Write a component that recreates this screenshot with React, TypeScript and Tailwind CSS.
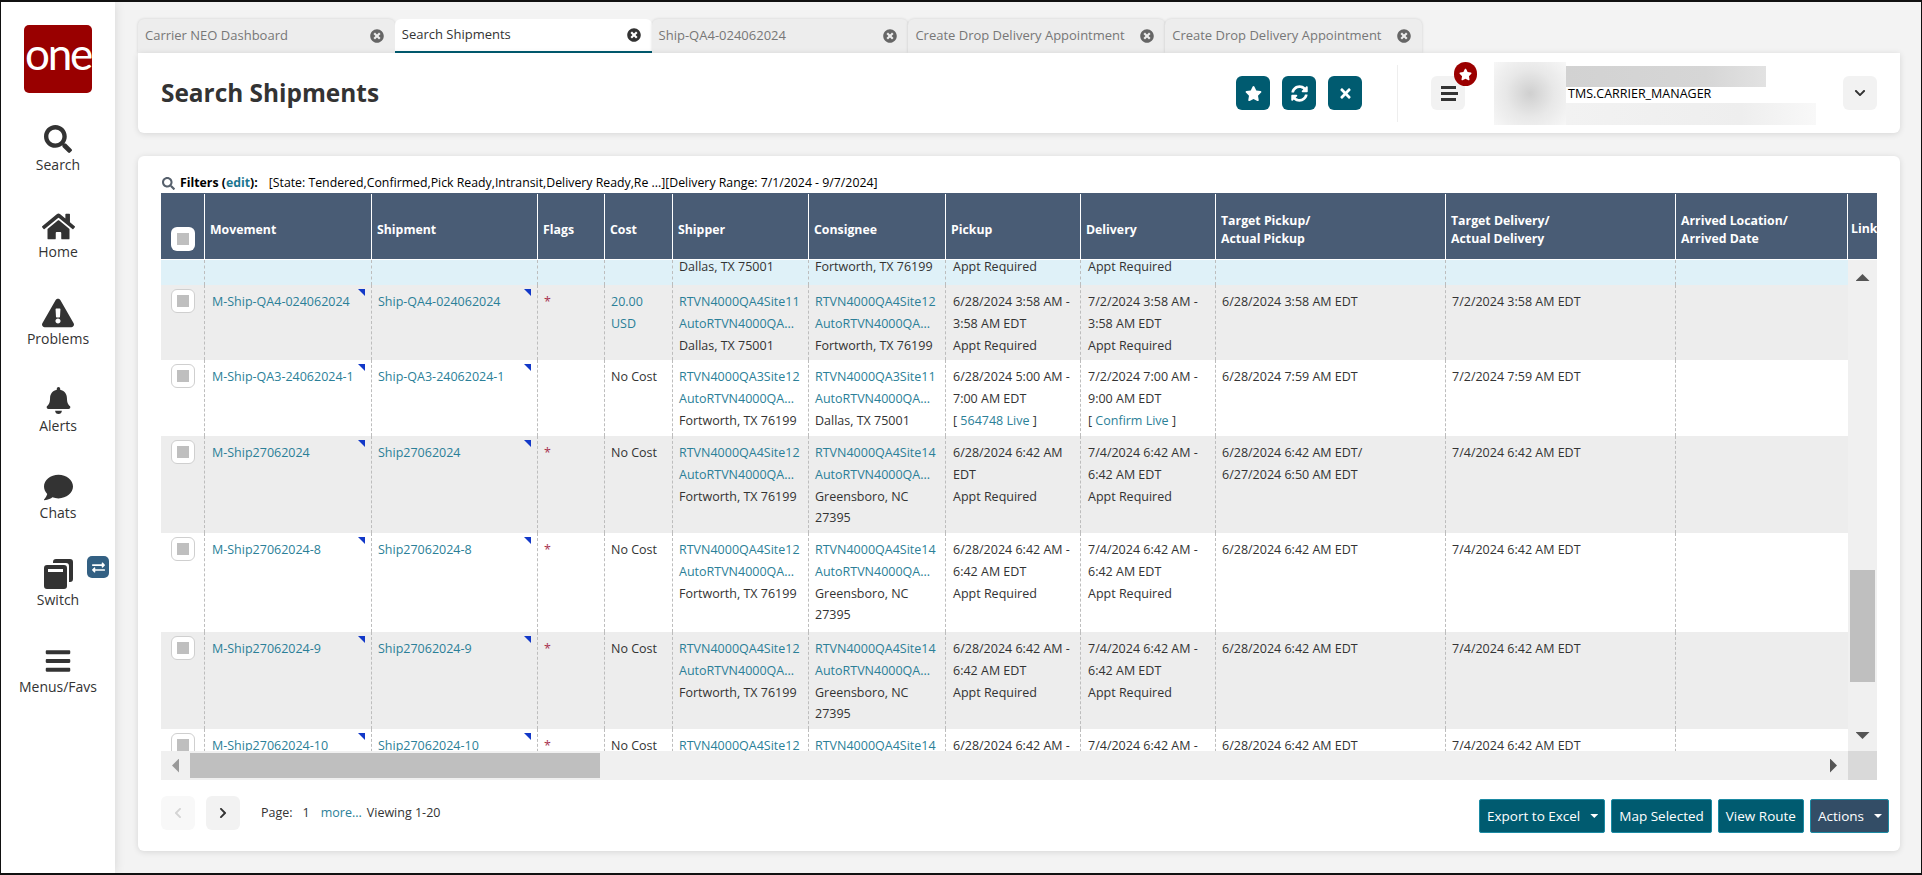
import React from "react";
import {
  FaSearch, FaHome, FaExclamationTriangle, FaBell, FaComment, FaBars, FaStar, FaSyncAlt,
  FaTimes, FaChevronDown, FaChevronLeft, FaChevronRight, FaTimesCircle, FaExchangeAlt,
} from "react-icons/fa";

const GRID = "grid grid-cols-[43px_167px_166px_67px_68px_136px_137px_135px_135px_230px_230px_173px]";

type L = { t: string; link?: boolean };
type Row = {
  h: string; bg: string; m: string; s: string; flag: boolean; cost: string[]; costLink?: boolean;
  shipper: L[]; consignee: L[]; pickup: React.ReactNode[]; delivery: React.ReactNode[]; tp: string[]; td: string[];
};

const A = "AutoRTVN4000QA...";
const site = (name: string, addr: string[]): L[] => [{ t: name, link: true }, { t: A, link: true }, ...addr.map((t) => ({ t }))];
const FW = ["Fortworth, TX 76199"];
const DA = ["Dallas, TX 75001"];
const GB = ["Greensboro, NC", "27395"];
const bracket = (s: string) => (
  <>[ <span className="text-[#2b7f98]">{s}</span> ]</>
);

const rows: Row[] = [
  { h: "h-[75px]", bg: "bg-[#ededed]", m: "M-Ship-QA4-024062024", s: "Ship-QA4-024062024", flag: true, cost: ["20.00", "USD"], costLink: true,
    shipper: site("RTVN4000QA4Site11", DA), consignee: site("RTVN4000QA4Site12", FW),
    pickup: ["6/28/2024 3:58 AM -", "3:58 AM EDT", "Appt Required"], delivery: ["7/2/2024 3:58 AM -", "3:58 AM EDT", "Appt Required"],
    tp: ["6/28/2024 3:58 AM EDT"], td: ["7/2/2024 3:58 AM EDT"] },
  { h: "h-[76px]", bg: "bg-white", m: "M-Ship-QA3-24062024-1", s: "Ship-QA3-24062024-1", flag: false, cost: ["No Cost"],
    shipper: site("RTVN4000QA3Site12", FW), consignee: site("RTVN4000QA3Site11", DA),
    pickup: ["6/28/2024 5:00 AM -", "7:00 AM EDT", bracket("564748 Live")], delivery: ["7/2/2024 7:00 AM -", "9:00 AM EDT", bracket("Confirm Live")],
    tp: ["6/28/2024 7:59 AM EDT"], td: ["7/2/2024 7:59 AM EDT"] },
  { h: "h-[97px]", bg: "bg-[#ededed]", m: "M-Ship27062024", s: "Ship27062024", flag: true, cost: ["No Cost"],
    shipper: site("RTVN4000QA4Site12", FW), consignee: site("RTVN4000QA4Site14", GB),
    pickup: ["6/28/2024 6:42 AM", "EDT", "Appt Required"], delivery: ["7/4/2024 6:42 AM -", "6:42 AM EDT", "Appt Required"],
    tp: ["6/28/2024 6:42 AM EDT/", "6/27/2024 6:50 AM EDT"], td: ["7/4/2024 6:42 AM EDT"] },
  { h: "h-[99px]", bg: "bg-white", m: "M-Ship27062024-8", s: "Ship27062024-8", flag: true, cost: ["No Cost"],
    shipper: site("RTVN4000QA4Site12", FW), consignee: site("RTVN4000QA4Site14", GB),
    pickup: ["6/28/2024 6:42 AM -", "6:42 AM EDT", "Appt Required"], delivery: ["7/4/2024 6:42 AM -", "6:42 AM EDT", "Appt Required"],
    tp: ["6/28/2024 6:42 AM EDT"], td: ["7/4/2024 6:42 AM EDT"] },
  { h: "h-[97px]", bg: "bg-[#ededed]", m: "M-Ship27062024-9", s: "Ship27062024-9", flag: true, cost: ["No Cost"],
    shipper: site("RTVN4000QA4Site12", FW), consignee: site("RTVN4000QA4Site14", GB),
    pickup: ["6/28/2024 6:42 AM -", "6:42 AM EDT", "Appt Required"], delivery: ["7/4/2024 6:42 AM -", "6:42 AM EDT", "Appt Required"],
    tp: ["6/28/2024 6:42 AM EDT"], td: ["7/4/2024 6:42 AM EDT"] },
  { h: "h-[97px]", bg: "bg-white", m: "M-Ship27062024-10", s: "Ship27062024-10", flag: true, cost: ["No Cost"],
    shipper: site("RTVN4000QA4Site12", FW), consignee: site("RTVN4000QA4Site14", GB),
    pickup: ["6/28/2024 6:42 AM -", "6:42 AM EDT", "Appt Required"], delivery: ["7/4/2024 6:42 AM -", "6:42 AM EDT", "Appt Required"],
    tp: ["6/28/2024 6:42 AM EDT"], td: ["7/4/2024 6:42 AM EDT"] },
];

const SEP = "border-l border-dashed border-[#bdbdbd]";

function Cell({ children, className = "" }: { children?: React.ReactNode; className?: string }) {
  return <div className={`${SEP} pt-[6px] leading-[21.8px] whitespace-nowrap overflow-hidden ${className}`}>{children}</div>;
}

function Lines({ items }: { items: React.ReactNode[] }) {
  return <>{items.map((x, i) => <div key={i}>{x}</div>)}</>;
}

function Corner() {
  return <span className="absolute top-[4px] right-[6px] w-[7px] h-[7px] bg-[#1238c8] [clip-path:polygon(0_0,100%_0,100%_100%)]" />;
}

function Check({ header = false }: { header?: boolean }) {
  return (
    <span className={`flex items-center justify-center w-[24px] h-[24px] rounded-[6px] bg-white ${header ? "" : "border border-[#cfcfcf]"}`}>
      <span className="w-[12px] h-[12px] bg-[#bfbfbf]" />
    </span>
  );
}

function Caret() {
  return <span className="ml-[10px] mr-[-1px] w-[8px] h-[4px] bg-white [clip-path:polygon(0_0,100%_0,50%_100%)]" />;
}

function SwitchIcon() {
  return (
    <svg width="29" height="30" viewBox="0 0 29 30" fill="#333">
      <path d="M9 3a3 3 0 0 1 3-3h14a3 3 0 0 1 3 3v17a3 3 0 0 1-3 3h-1V7a3 3 0 0 0-3-3H9z" />
      <path fillRule="evenodd" d="M3 6h17a3 3 0 0 1 3 3v18a3 3 0 0 1-3 3H3a3 3 0 0 1-3-3V9a3 3 0 0 1 3-3zm1 4v3h15v-3z" />
    </svg>
  );
}

const navItems: { label: string; icon: React.ReactNode; badge?: boolean }[] = [
  { label: "Search", icon: <FaSearch size={28} /> },
  { label: "Home", icon: <FaHome size={33} /> },
  { label: "Problems", icon: <FaExclamationTriangle size={32} /> },
  { label: "Alerts", icon: <FaBell size={27} /> },
  { label: "Chats", icon: <FaComment size={29} /> },
  { label: "Switch", icon: <SwitchIcon />, badge: true },
  { label: "Menus/Favs", icon: <FaBars size={28} /> },
];

const tabs = ["Carrier NEO Dashboard", "Search Shipments", "Ship-QA4-024062024", "Create Drop Delivery Appointment", "Create Drop Delivery Appointment"];
const heads: React.ReactNode[] = [
  "Movement", "Shipment", "Flags", "Cost", "Shipper", "Consignee", "Pickup", "Delivery",
  <>Target Pickup/<br />Actual Pickup</>, <>Target Delivery/<br />Actual Delivery</>, <>Arrived Location/<br />Arrived Date</>,
];

function HeadBtn({ children }: { children: React.ReactNode }) {
  return <button className="flex items-center justify-center w-[34px] h-[34px] rounded-[6px] bg-[#005b70] text-white">{children}</button>;
}
function FootBtn({ children, dark = false }: { children: React.ReactNode; dark?: boolean }) {
  return (
    <button className={`flex items-center h-[34px] px-[7px] rounded-[2px] border border-[#1b8aa3] text-white text-[13.5px] ${dark ? "bg-[#334d66]" : "bg-[#005b70]"}`}>
      {children}
    </button>
  );
}

export default function App() {
  return (
    <div className="w-[1922px] h-[875px] flex overflow-hidden bg-[#f3f3f3] border-t-2 border-b-2 border-l border-r border-[#111] font-['Open_Sans',sans-serif] text-[#333] text-[12.5px]">
      <aside className="w-[114px] shrink-0 bg-white shadow-[0_0_10px_rgba(0,0,0,0.12)] flex flex-col items-center pt-[23px]">
        <div className="w-[68px] h-[68px] rounded-[5px] bg-[#990000] flex items-center justify-center text-white text-[44px] leading-none tracking-[-0.05em] pb-[12px] font-['Lato',sans-serif]">one</div>
        <nav className="mt-[27px] w-full flex flex-col">
          {navItems.map((n) => (
            <div key={n.label} className="relative h-[87px] flex flex-col items-center">
              <div className="h-[38px] flex items-center justify-center text-[#333]">{n.icon}</div>
              <div className="text-[14px] leading-[14px]">{n.label}</div>
              {n.badge && (
                <span className="absolute left-[86px] top-[1px] w-[22px] h-[22px] rounded-[5px] bg-[#336083] text-white flex items-center justify-center">
                  <FaExchangeAlt size={13} />
                </span>
              )}
            </div>
          ))}
        </nav>
      </aside>

      <main className="flex-1 pl-[23px] pr-[21px] pt-[17px] flex flex-col">
        <div className="flex h-[34px]">
          {tabs.map((t, i) => (
            <div key={i} className={`w-[256.8px] flex items-center justify-between pl-[7px] pr-[11px] rounded-t-[6px] text-[13px] ${i === 1 ? "bg-white text-[#333] border-b-2 border-[#005b70]" : "bg-[#ededed] text-[#777] shadow-[0_0_3px_rgba(0,0,0,0.15)]"}`}>
              <span>{t}</span>
              <FaTimesCircle size={14} className={i === 1 ? "text-[#333]" : "text-[#666]"} />
            </div>
          ))}
        </div>

        <header className="h-[80px] bg-white rounded-b-[6px] shadow-[0_1px_6px_rgba(0,0,0,0.12)] flex items-center pl-[23px] pr-[23px]">
          <h1 className="text-[24.4px] font-bold text-[#333]">Search Shipments</h1>
          <div className="ml-auto flex items-center gap-[12px]">
            <HeadBtn><FaStar size={17} /></HeadBtn>
            <HeadBtn><FaSyncAlt size={17} /></HeadBtn>
            <HeadBtn><FaTimes size={15} /></HeadBtn>
          </div>
          <div className="w-px h-[57px] bg-[#eeeeee] ml-[35px] mr-[33px]" />
          <div className="relative w-[34px] h-[34px] rounded-[6px] bg-[#f2f2f2] flex flex-col items-center justify-center gap-[3px]">
            <span className="w-[15px] h-[3px] bg-[#333]" />
            <span className="w-[17px] h-[3px] bg-[#333] ml-[3px]" />
            <span className="w-[15px] h-[3px] bg-[#333]" />
            <span className="absolute -top-[14px] -right-[12px] w-[23px] h-[24px] rounded-full bg-[#9b0000] flex items-center justify-center text-white">
              <FaStar size={13} />
            </span>
          </div>
          <div className="w-[72px] h-[63px] ml-[29px] bg-[radial-gradient(circle,#cfcfcf_0%,#e8e8e8_50%,#f7f7f7_100%)]" />
          <div className="w-[250px] h-[59px] mt-[4px] flex flex-col">
            <div className="w-[200px] h-[21px] shrink-0 bg-[linear-gradient(90deg,#d2d2d2,#d6d6d6_70%,#e2e2e2)]" />
            <div className="h-[16px] leading-[14px] pl-[2px] text-black">TMS.CARRIER_MANAGER</div>
            <div className="h-[22px] bg-[linear-gradient(90deg,#f2f2f2,#eeeeee_70%,#f8f8f8)]" />
          </div>
          <button className="ml-[27px] w-[34px] h-[34px] rounded-[6px] bg-[#f2f2f2] flex items-center justify-center text-[#333]">
            <FaChevronDown size={12} />
          </button>
        </header>

        <section className="mt-[23px] h-[695px] bg-white rounded-[6px] shadow-[0_1px_6px_rgba(0,0,0,0.12)] pl-[23px] flex flex-col">
          <div className="h-[37px] pt-[17px] flex items-center text-[12.3px] whitespace-nowrap">
            <FaSearch size={13} className="text-[#56606c] mr-[5px] ml-px" />
            <span className="font-bold text-black">Filters (<span className="text-[#1a7690]">edit</span>):</span>
            <span className="ml-[11px] text-black">[State: Tendered,Confirmed,Pick Ready,Intransit,Delivery Ready,Re ...][Delivery Range: 7/1/2024 - 9/7/2024]</span>
          </div>

          <div className="w-[1716px] overflow-hidden">
            <div className="grid grid-cols-[43px_167px_166px_67px_68px_136px_137px_135px_135px_230px_230px_172px_60px] w-[1776px] h-[67px] bg-[#495c75] border-b border-white text-white font-bold text-[12.3px]">
              <div className="flex items-center pl-[10px] pt-[26px]"><Check header /></div>
              {heads.map((h, i) => (
                <div key={i} className="border-l border-white mt-px flex items-center pl-[5px] leading-[18px] pt-[6px]">{h}</div>
              ))}
              <div className="border-l border-white mt-px flex items-center pl-[3px] pt-[6px]">Link</div>
            </div>

            <div className="flex h-[491px]">
              <div className="w-[1687px] overflow-hidden">
                <div className={`${GRID} h-[25px] bg-[#dff1f8]`}>
                  <div />
                  <div className={SEP} /><div className={SEP} /><div className={SEP} /><div className={SEP} />
                  <div className={`${SEP} pl-[6px] leading-[22px]`}><div className="-mt-[4px]">Dallas, TX 75001</div></div>
                  <div className={`${SEP} pl-[6px] leading-[22px]`}><div className="-mt-[4px]">Fortworth, TX 76199</div></div>
                  <div className={`${SEP} pl-[7px] leading-[22px]`}><div className="-mt-[4px]">Appt Required</div></div>
                  <div className={`${SEP} pl-[7px] leading-[22px]`}><div className="-mt-[4px]">Appt Required</div></div>
                  <div className={SEP} /><div className={SEP} /><div className={SEP} />
                </div>
                {rows.map((r, i) => (
                  <div key={i} className={`${GRID} ${r.h} ${r.bg} shrink-0`}>
                    <div className="pl-[10px] pt-[4px]"><Check /></div>
                    <Cell className="relative pl-[7px] text-[#2b7f98]">{r.m}<Corner /></Cell>
                    <Cell className="relative pl-[6px] text-[#2b7f98]">{r.s}<Corner /></Cell>
                    <Cell className="pl-[6px] text-[#a8324f]">{r.flag ? "*" : ""}</Cell>
                    <Cell className={`pl-[6px] ${r.costLink ? "text-[#2b7f98]" : ""}`}><Lines items={r.cost} /></Cell>
                    <Cell className="pl-[6px]">{r.shipper.map((l, k) => <div key={k} className={l.link ? "text-[#2b7f98]" : ""}>{l.t}</div>)}</Cell>
                    <Cell className="pl-[6px]">{r.consignee.map((l, k) => <div key={k} className={l.link ? "text-[#2b7f98]" : ""}>{l.t}</div>)}</Cell>
                    <Cell className="pl-[7px]"><Lines items={r.pickup} /></Cell>
                    <Cell className="pl-[7px]"><Lines items={r.delivery} /></Cell>
                    <Cell className="pl-[6px]"><Lines items={r.tp} /></Cell>
                    <Cell className="pl-[6px]"><Lines items={r.td} /></Cell>
                    <Cell />
                  </div>
                ))}
              </div>
              <div className="w-[29px] bg-[#f0f0f0] flex flex-col items-center">
                <span className="mt-[14px] w-[14px] h-[7px] bg-[#555] [clip-path:polygon(50%_0,100%_100%,0_100%)]" />
                <span className="mt-[289px] w-[25px] h-[112px] bg-[#bfbfbf]" />
                <span className="mt-[50px] w-[14px] h-[7px] bg-[#555] [clip-path:polygon(0_0,100%_0,50%_100%)]" />
              </div>
            </div>

            <div className="flex h-[29px]">
              <div className="w-[1687px] bg-[#f0f0f0] flex items-center pl-[11px]">
                <span className="w-[7px] h-[14px] bg-[#999] [clip-path:polygon(100%_0,100%_100%,0_50%)]" />
                <span className="ml-[11px] w-[410px] h-[25px] bg-[#bfbfbf]" />
                <span className="ml-auto mr-[11px] w-[7px] h-[14px] bg-[#555] [clip-path:polygon(0_0,100%_50%,0_100%)]" />
              </div>
              <div className="w-[29px] bg-[#d9d9d9]" />
            </div>
          </div>

          <footer className="flex-1 flex items-start pr-[11px]">
            <div className="mt-[16px] flex items-center">
              <button className="w-[34px] h-[34px] rounded-[6px] bg-[#f8f8f8] text-[#d4d4d4] flex items-center justify-center"><FaChevronLeft size={12} /></button>
              <button className="ml-[11px] w-[34px] h-[34px] rounded-[6px] bg-[#f2f2f2] text-[#333] flex items-center justify-center"><FaChevronRight size={12} /></button>
              <span className="ml-[21px]">Page:</span>
              <span className="ml-[10px]">1</span>
              <span className="ml-[11px] text-[#2b7f98]">more...</span>
              <span className="ml-[5px]">Viewing 1-20</span>
            </div>
            <div className="ml-auto mt-[19px] flex gap-[6px]">
              <FootBtn>Export to Excel<Caret /></FootBtn>
              <FootBtn>Map Selected</FootBtn>
              <FootBtn>View Route</FootBtn>
              <FootBtn dark>Actions<Caret /></FootBtn>
            </div>
          </footer>
        </section>
      </main>
    </div>
  );
}
